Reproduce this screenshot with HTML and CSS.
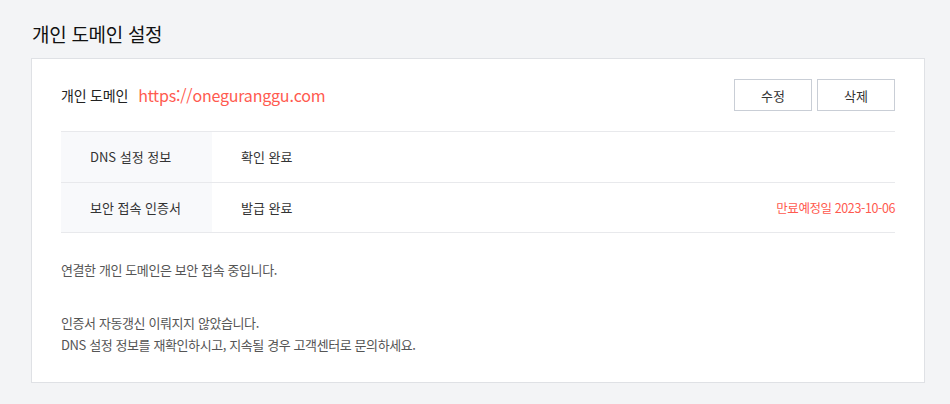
FILE: index.html
```html
<!DOCTYPE html>
<html lang="ko">
<head>
  <meta charset="UTF-8" />
  <meta name="viewport" content="width=device-width, initial-scale=1.0" />
  <title>개인 도메인 설정</title>
  <link rel="stylesheet" href="styles.css">
</head>
<body>
  <div class="page">
    <h2 class="page-title">개인 도메인 설정</h2>
    <div class="card">
      <div class="domain-head">
        <div class="domain-name">
          <span class="label">개인 도메인</span>
          <span class="url">https://oneguranggu.com</span>
        </div>
        <div class="btns">
          <button class="btn">수정</button>
          <button class="btn">삭제</button>
        </div>
      </div>
      <table class="info">
        <tr>
          <th>DNS 설정 정보</th>
          <td>확인 완료</td>
          <td class="note"></td>
        </tr>
        <tr>
          <th>보안 접속 인증서</th>
          <td>발급 완료</td>
          <td class="note">만료예정일 2023-10-06</td>
        </tr>
      </table>
      <p class="desc">연결한 개인 도메인은 보안 접속 중입니다.</p>
      <p class="desc">인증서 자동갱신 이뤄지지 않았습니다.<br>DNS 설정 정보를 재확인하시고, 지속될 경우 고객센터로 문의하세요.</p>
    </div>
  </div>
</body>
</html>
```

FILE: styles.css
```css
* {
  margin: 0;
  padding: 0;
  box-sizing: border-box;
  font-family: 'Noto Sans CJK KR', 'Noto Sans', sans-serif;
}
body {
  background: #f3f4f6;
  color: #222;
}
.page {
  padding: 19px 0 0 31px;
  width: 925px;
}
.page-title {
  font-size: 19px;
  font-weight: 400;
  line-height: 30px;
  letter-spacing: -0.3px;
  color: #111;
  margin-bottom: 9px;
  padding-left: 1px;
}
.card {
  background: #fff;
  border: 1px solid #dfe1e5;
  padding: 0 29px 26px 29px;
}
.domain-head {
  display: flex;
  justify-content: space-between;
  align-items: center;
  padding: 20px 0 20px;
  border-bottom: 1px solid #e8e9ec;
}
.domain-name {
  display: flex;
  align-items: center;
  gap: 10px;
}
.domain-name .label {
  font-size: 14px;
  letter-spacing: -0.2px;
  color: #222;
}
.domain-name .url {
  font-size: 16px;
  letter-spacing: -0.2px;
  color: #ff5a4f;
}
.btns {
  display: flex;
  gap: 5px;
}
.btn {
  width: 78px;
  height: 32px;
  background: #fff;
  border: 1px solid #c9ced6;
  font-size: 13px;
  color: #333;
  cursor: pointer;
}
.info {
  width: 100%;
  border-collapse: collapse;
}
.info th,
.info td {
  height: 50px;
  border-bottom: 1px solid #e8e9ec;
  font-size: 13px;
  font-weight: 400;
  color: #333;
  text-align: left;
}
.info th {
  width: 151px;
  background: #f8f9fb;
  padding-left: 29px;
}
.info td {
  padding-left: 29px;
}
.info td.note {
  text-align: right;
  font-size: 12.5px;
  letter-spacing: -0.4px;
  color: #ff5a4f;
  padding-left: 0;
}
.desc {
  font-size: 13px;
  line-height: 22px;
  letter-spacing: -0.4px;
  color: #555;
  margin-top: 26px;
}
.desc + .desc {
  margin-top: 31px;
}
```
